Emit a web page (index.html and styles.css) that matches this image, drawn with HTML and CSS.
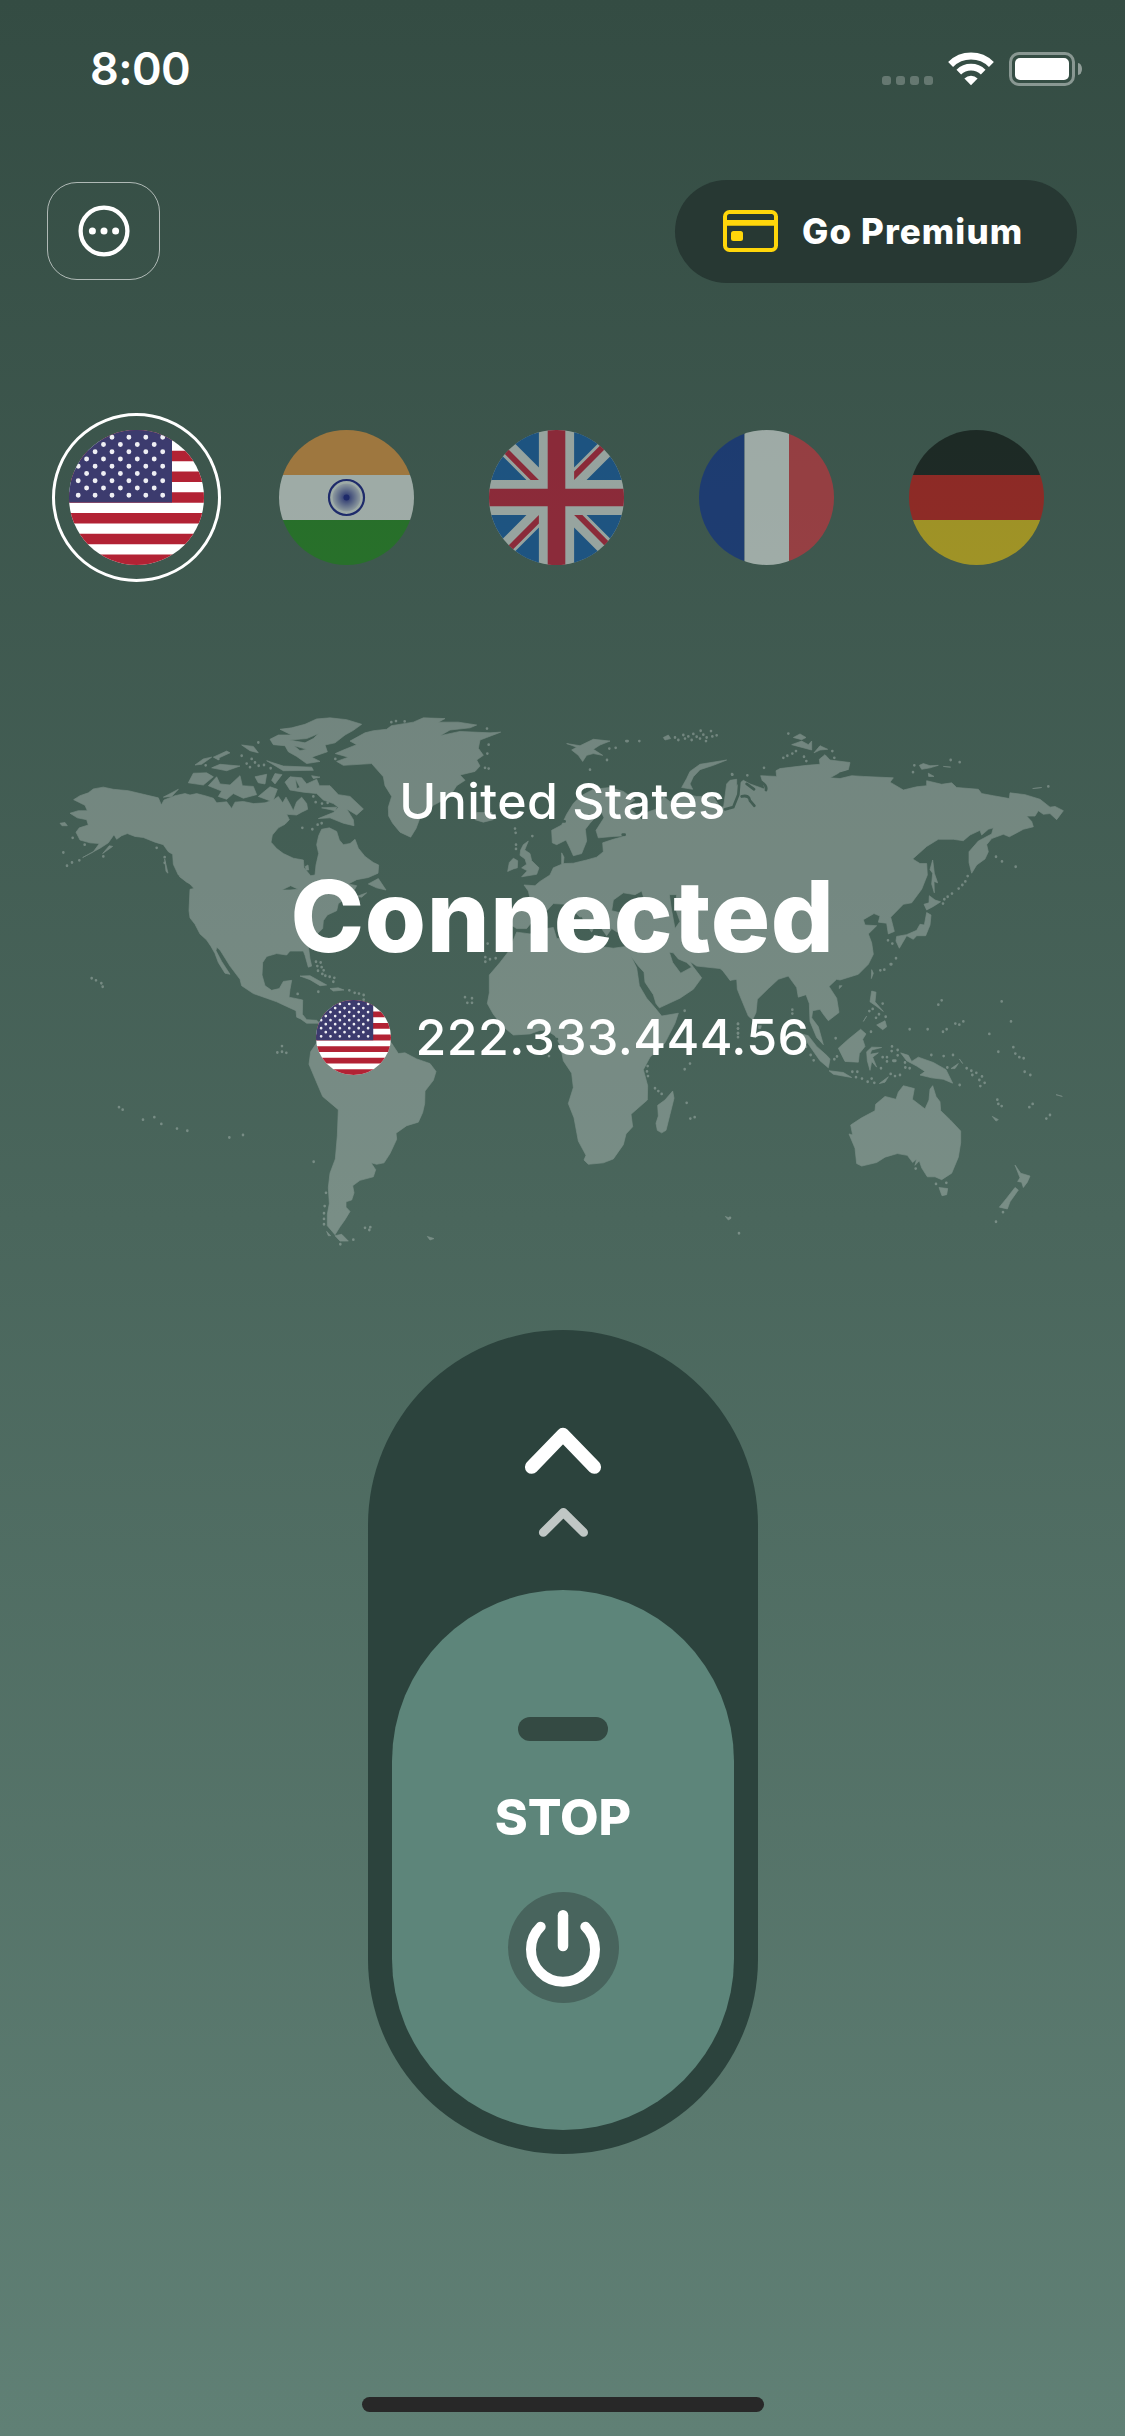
FILE: index.html
```html
<!DOCTYPE html>
<html lang="en">
<head>
<meta charset="utf-8">
<title>VPN</title>
<link rel="stylesheet" href="styles.css">
</head>
<body>
<svg class="defs" width="0" height="0" aria-hidden="true">
  <defs>
    <clipPath id="round"><circle cx="67.5" cy="67.5" r="67.5"/></clipPath>
    <radialGradient id="spokes"><stop offset="0" stop-color="#000088"/><stop offset="0.25" stop-color="#000088" stop-opacity=".75"/><stop offset="1" stop-color="#000088" stop-opacity=".12"/></radialGradient>
    <symbol id="us" viewBox="0 0 135 135">
      <g clip-path="url(#round)">
        <path fill="#fff" d="M0 0h135v135H0z"/>
        <path stroke="#b22234" stroke-width="10.38" d="M0 5.2h135M0 26h135M0 46.7h135M0 67.5h135M0 88.3h135M0 109h135M0 129.8h135"/>
        <path fill="#3c3b6e" d="M0 0h103v72.6H0z"/>
        <g stroke="#fff" stroke-width="4.9" stroke-linecap="round" stroke-dasharray="0 16.9" opacity=".92">
          <path d="M9.2 7.2h86M9.2 21.8h86M9.2 36.3h86M9.2 50.8h86M9.2 65.3h86M17.6 14.5h70M17.6 29h70M17.6 43.5h70M17.6 58h70"/>
        </g>
      </g>
    </symbol>
  </defs>
</svg>
<main class="screen">
  <header class="status">
    <span class="time">8:00</span>
    <div class="indicators">
      <div class="signal"><i></i><i></i><i></i><i></i></div>
      <svg class="wifi" width="46" height="34" viewBox="0 0 46 34">
        <g fill="none" stroke="#fff"><path stroke-width="7" d="M2.6 12.4a29 29 0 0 1 40.8 0"/><path stroke-width="6.6" d="M10.8 20.2a17.3 17.3 0 0 1 24.4 0"/></g>
        <path fill="#fff" d="M23 33.2l-6.6-6.7a9.5 9.5 0 0 1 13.200 0z"/>
      </svg>
      <div class="battery"><div class="cell"><div class="charge"></div></div><div class="nub"></div></div>
    </div>
  </header>

  <nav class="toolbar">
    <button class="menu" aria-label="Menu">
      <svg width="52" height="52" viewBox="0 0 52 52"><circle cx="26" cy="26" r="23.400" fill="none" stroke="#fff" stroke-width="4.300"/><g fill="#fff"><circle cx="14.400" cy="26" r="3.500"/><circle cx="26" cy="26" r="3.500"/><circle cx="37.600" cy="26" r="3.500"/></g></svg>
    </button>
    <button class="premium">
      <svg width="55" height="42" viewBox="0 0 55 42"><rect x="2" y="2" width="51" height="38" rx="4.500" fill="none" stroke="#ffd60a" stroke-width="4"/><path fill="#ffd60a" d="M2 10h51v5.700H2z"/><rect x="8" y="21" width="12" height="10" rx="2.500" fill="#ffd60a"/></svg>
      <span>Go Premium</span>
    </button>
  </nav>

  <section class="countries">
    <div class="country selected"><svg class="flag"><use href="#us"/></svg></div>
    <div class="country">
      <svg class="flag" viewBox="0 0 135 135"><g clip-path="url(#round)"><path fill="#f93" d="M0 0h135v45H0z"/><path fill="#fff" d="M0 45h135v45H0z"/><path fill="#138808" d="M0 90h135v45H0z"/></g><circle cx="67.500" cy="67.500" r="14" fill="url(#spokes)"/><circle cx="67.500" cy="67.500" r="17.500" fill="none" stroke="#008" stroke-width="2.200"/><circle cx="67.500" cy="67.500" r="3" fill="#008"/></svg>
    </div>
    <div class="country">
      <svg class="flag" viewBox="0 0 512 512"><circle fill="#f0f0f0" cx="256" cy="256" r="256"/>
        <path fill="#0052b4" d="M52.920 100.142c-20.109 26.163-35.272 56.318-44.101 89.077h133.178zM503.181 189.219c-8.829-32.758-23.993-62.913-44.101-89.076l-89.075 89.076zM8.819 322.784c8.830 32.758 23.993 62.913 44.101 89.075l89.074-89.075zM411.858 52.921c-26.163-20.109-56.317-35.272-89.076-44.102v133.177zM100.142 459.079c26.163 20.109 56.318 35.272 89.076 44.102V370.005zM189.217 8.819c-32.758 8.830-62.913 23.993-89.075 44.101l89.075 89.075zM322.783 503.181c32.758-8.830 62.913-23.993 89.075-44.101l-89.075-89.075zM370.005 322.784l89.075 89.076c20.108-26.162 35.272-56.318 44.101-89.076z"/>
        <path fill="#d80027" d="M509.833 222.609H289.392V2.167a258 258 0 0 0-66.783 0v220.442H2.167a258 258 0 0 0 0 66.783h220.442v220.441a258 258 0 0 0 66.783 0V289.392h220.441a258 258 0 0 0 0-66.783zM322.783 322.784L437.019 437.020c5.254-5.252 10.266-10.743 15.048-16.435l-97.802-97.802zM189.217 322.784L74.980 437.019c5.252 5.254 10.743 10.266 16.435 15.048l97.802-97.804zM189.217 189.219L74.981 74.980c-5.254 5.252-10.266 10.743-15.048 16.435l97.803 97.803zM322.783 189.219L437.020 74.981c-5.252-5.254-10.743-10.266-16.435-15.047l-97.802 97.803z"/></svg>
    </div>
    <div class="country">
      <svg class="flag" viewBox="0 0 135 135"><g clip-path="url(#round)"><path fill="#002395" d="M0 0h45.500v135H0z"/><path fill="#fff" d="M45.500 0h44.500v135H45.500z"/><path fill="#ed2939" d="M90 0h45v135H90z"/></g></svg>
    </div>
    <div class="country">
      <svg class="flag" viewBox="0 0 135 135"><g clip-path="url(#round)"><path d="M0 0h135v45H0z"/><path fill="#d00" d="M0 45h135v45H0z"/><path fill="#ffce00" d="M0 90h135v45H0z"/></g></svg>
    </div>
  </section>

  <section class="hero">
    <svg class="map" viewBox="0 0 3150 1568" preserveAspectRatio="none" aria-hidden="true">
      <mask id="water" maskUnits="userSpaceOnUse" x="0" y="0" width="3150" height="1568">
        <path fill="#fff" d="M0 0h3150v1568H0z"/>
        <g fill="none" stroke="#000" stroke-width="8" stroke-linecap="round">
          <path d="M1582 444h0M1608 446h0M1625 440h0M1640 418h0M1652 384h0M1675 405h0M1748 377h6M1568 340h6M1940 745h0M1545 950h6M2350 890h0M2400 207l22-6"/>
          <path d="M2098 230L2095 265 2080 300 2055 306M2120 235L2142 250M2165 230Q2182 240 2178 252M2105 270Q2128 265 2130 282L2143 296"/>
        </g>
      </mask>
      <g class="land" mask="url(#water)">
        <!-- Americas and Greenland -->
        <path fill-rule="evenodd" d="M101 279L120 268 145 260 160 249 190 244 220 250 265 254 310 264 355 274 364 294 372 280 405 268 435 262 450 266 470 262 495 268 520 275 530 288 560 285 575 304 585 286 610 284 640 290 675 288 700 280 715 270 728 288 738 272 750 292 760 310 770 285 785 272 800 290 803 306 785 314 770 322 740 320 748 335 735 348 715 358 697 378 693 398 710 416 730 430 760 443 790 448 792 470 812 492 825 490 828 462 836 430 830 405 836 380 845 362 868 358 890 368 898 392 910 405 930 402 945 390 955 415 975 438 1000 455 1016 462 1014 485 985 497 950 503 925 515 950 520 935 545 895 570 890 590 862 602 850 618 848 640 820 665 805 690 810 725 815 745 805 748 795 715 790 703 750 703 740 714 710 710 680 718 668 735 666 770 675 800 695 813 718 808 730 788 755 785 750 810 747 832 788 840 787 880 800 895 830 897 850 915 880 900 920 915 970 930 1020 945 1054 960 1075 990 1095 988 1130 1005 1170 1018 1188 1040 1180 1065 1155 1095 1154 1130 1148 1155 1135 1182 1100 1192 1068 1213 1070 1230 1050 1270 1032 1296 1010 1300 993 1296 1007 1315 1000 1335 960 1345 938 1360 942 1380 935 1400 918 1405 918 1420 930 1432 915 1455 900 1475 885 1497 862 1472 862 1440 868 1410 865 1365 870 1325 886 1285 892 1220 895 1147 848 1110 825 1060 807 1020 812 985 830 960 850 935 835 905 800 905 782 893 770 888 768 870 740 858 710 845 680 835 640 822 605 800 600 782 570 745 540 700 530 692 528 702 545 732 570 768 555 765 535 735 525 710 513 690 500 672 480 655 465 628 450 610 447 590 450 530 462 528 440 505 415 490 400 460 398 432 385 425 370 405 345 398 310 385 285 382 262 374 245 380 230 390 222 377 205 400 180 415 128 441 160 425 178 402 150 400 120 392 108 370 118 358 145 350 140 335 112 330 90 317 115 310 142 310 135 295zM725 532L752 520 775 530 750 532zM796 466L804 462 806 476 798 476z"/>
        <path d="M886 150L910 140 950 125 930 115 975 92 1000 86 1040 82 1054 72 1120 62 1150 50 1215 52 1195 62 1255 62 1310 70 1290 78 1230 84 1200 100 1260 88 1350 92 1382 90 1340 105 1320 112 1315 135 1330 155 1310 168 1320 185 1305 200 1260 210 1275 225 1250 240 1235 262 1210 280 1180 295 1140 330 1128 360 1112 384 1080 370 1058 345 1046 325 1045 300 1055 270 1035 240 1030 215 995 178 910 183 890 172 925 160z"/>
        <path fill-rule="evenodd" d="M795 68L830 53 870 50 920 55 965 68 940 85 915 98 885 120 855 126 862 145 815 160 840 172 800 178 770 158 745 145 735 128 700 125 690 110 715 98 755 98 720 82 755 78zM748 112L800 108 836 94 820 108 795 120zM762 128L800 138 780 142z"/>
        <path fill-rule="evenodd" d="M735 230L750 215 785 218 800 235 830 222 838 240 870 240 895 265 930 270 970 305 950 322 920 305 940 335 942 352 910 345 870 330 835 332 880 315 895 300 880 290 850 280 830 262 790 258 750 252zM766 220L780 245 770 248z"/>
        <path d="M505 240L530 215 540 235 570 238 600 212 607 240 640 242 650 265 610 275 580 262 560 278 535 270 545 255zM445 232L460 205 500 204 520 215 490 238zM645 215L680 208 675 235 655 232zM695 225L705 206 726 209 705 235zM465 182L490 165 515 160 485 180zM520 160L560 143 570 148 530 165zM515 190L540 180 600 185 560 198zM605 126L640 130 655 148 630 142zM680 170L730 185 815 188 820 197 730 198zM655 270L690 243 712 250 698 285zM815 212L840 216 820 220zM845 302L890 300 885 310zM985 515L1015 500 1038 532 1010 526zM950 550L980 540 965 552zM780 773L810 772 860 798 840 800 810 783zM870 808L895 806 912 812 880 815zM885 1500L905 1496 925 1515 900 1515zM860 1488L872 1500 865 1500zM60 345L75 343 82 352 66 352zM1305 335L1330 342 1360 335 1355 315 1310 315zM188 430L208 408 218 410zM374 445L384 485 378 480zM370 272L415 250 395 270zM418 494L440 498 460 520 440 510z"/>
        <path class="isles" d="M98 386h0M134 405h0M70 427h0M81 464h0M96 455h0M118 449h0M190 438h0M374 440h0M374 456h0M350 414h0M155 779h0M168 785h0M184 793h0M188 803h0M237 1140h0M248 1147h0M309 1175h0M343 1168h0M364 1187h0M411 1200h0M442 1206h0M568 1225h0M609 1218h0M821 1293h0M712 987h0M726 969h0M726 985h0M739 988h0M828 733h0M842 735h0M832 745h0M845 748h0M834 758h0M851 757h0M847 767h0M856 772h0M869 775h0M883 778h0M880 789h0M773 823h0M835 817h0M928 813h0M944 820h0M957 822h0M971 826h0M971 839h0M858 1380h0M854 1417h0M852 1437h0M852 1453h0M852 1468h0M975 1478h0M991 1476h0M988 1484h0M901 1524h0M940 1511h0M1054 62h0M1068 59h0M1094 60h0M605 156h0M655 119h0M635 165h0M620 178h0M630 188h0M645 175h0M656 184h0M672 182h0M692 191h0M820 270h0M827 286h0M846 290h0M863 288h0M787 358h0M817 362h0M833 349h0M845 345h0M535 165h0M497 183h0M886 165h0M744 504h0M1341 80h0M1346 125h0M1342 150h0M1346 192h0M1335 190h0"/>
        <!-- Africa and western Eurasia -->
        <g transform="translate(1020)">
          <path d="M385 705L410 650 450 655 500 640 520 637 530 668 600 672 660 690 700 695 740 690 750 712 770 750 778 800 800 835 825 862 845 885 895 877 885 905 855 960 810 1000 790 1035 803 1080 802 1120 753 1160 758 1195 738 1215 730 1245 700 1285 670 1296 625 1300 612 1288 618 1275 595 1235 582 1170 565 1130 580 1085 575 1045 550 1010 545 985 540 965 525 940 500 925 480 925 450 935 400 938 370 915 340 880 322 850 328 820 328 770 360 735z"/>
          <path fill-rule="evenodd" d="M432 518L465 520 480 508 510 490 520 470 545 460 545 428 552 440 550 458 580 457 620 448 650 440 670 425 668 400 700 390 740 380 700 382 655 386 648 365 672 330 665 315 645 330 630 345 616 362 620 395 605 430 580 436 570 415 558 392 530 405 517 400 515 365 545 350 560 320 580 290 600 270 640 250 690 245 730 256 765 280 740 295 785 335 800 315 830 305 850 270 870 285 905 262 950 270 1000 270 1020 300 1045 298 1075 305 1085 780 1050 785 1045 770 1020 752 950 745 930 732 938 745 965 778 940 810 900 835 838 862 828 850 820 825 795 790 792 762 775 745 755 720 740 700 760 660 720 655 695 640 680 660 650 620 635 650 600 600 560 572 520 570 500 590 470 605 440 640 410 640 385 625 390 600 430 590 450 555 445 535zM695 590L700 560 730 540 765 545 785 535 790 550 770 570 775 590 740 600zM868 545L890 545 885 580 900 620 885 640 875 590zM868 706L878 735 902 765 935 748 920 735 895 725 880 708z"/>
          <path d="M878 1095L882 1115 870 1160 858 1205 845 1212 832 1205 828 1185 835 1165 833 1135 855 1120zM445 395L430 405 422 420 420 435 435 445 440 460 425 470 442 478 425 495 470 488 477 470 455 450 450 430 434 420zM383 480L388 455 400 443 413 450 412 470 400 473zM560 122L600 128 640 110 690 115 660 126 640 138 668 155 640 150 620 155 608 172 595 155 575 140 590 132zM905 245L920 220 930 200 960 180 1040 168 1000 183 960 195 940 215 930 235 938 250zM850 105L865 98 872 108 855 112zM575 585L615 600 600 608zM142 1502L162 1508 150 1512zM1036 1446L1052 1452 1045 1456z"/>
          <path class="isles" d="M739 115h4M778 115h0M688 136h0M707 134h0M681 168h0M630 195h0M885 105h0M895 112h0M910 98h0M915 108h0M925 102h0M935 112h0M940 95h0M950 103h0M962 86h0M960 108h0M970 97h0M980 105h0M993 87h0M997 102h0M1010 99h0M978 115h0M405 360h0M407 372h0M408 405h0M408 417h0M457 381h0M323 682h0M316 720h0M316 733h0M330 726h0M347 723h0M255 832h0M276 835h0M262 848h0M276 848h0M914 870h0M930 1018h0M914 1034h0M803 1025h0M801 1040h0M804 1053h0M825 1087h0M835 1095h0M845 1103h0M920 1128h0M931 1172h0M944 1168h0M507 997h0M1074 907h0M1074 920h0M1074 933h0M1056 208h0"/>
        </g>
        <!-- Asia and Oceania -->
        <g transform="translate(2070)">
          <path d="M-20 305L-10 235 0 225 20 222 20 240 40 225 60 235 90 245 105 250 100 235 92 212 140 214 138 198 150 192 230 183 270 180 268 166 285 153 300 168 360 175 355 195 325 205 300 218 330 220 365 212 400 214 490 218 480 230 520 252 560 243 590 240 590 226 635 236 665 232 680 245 745 250 755 262 790 268 838 276 840 260 885 265 930 278 960 300 975 298 1000 310 980 335 960 318 940 320 925 310 915 325 890 325 905 340 910 355 880 362 838 383 820 376 785 388 770 405 775 425 765 445 740 462 725 485 717 455 717 425 745 395 785 375 790 358 775 362 755 378 750 365 720 378 700 394 670 390 625 390 590 410 548 445 570 458 590 458 592 490 575 530 545 568 520 572 482 608 493 648 475 655 470 625 445 622 450 605 432 598 400 615 405 630 440 632 415 655 425 680 430 712 415 740 385 768 330 784 320 782 297 802 320 835 327 875 295 898 280 880 270 866 248 870 245 890 265 915 280 965 260 945 240 900 238 850 228 825 205 832 200 805 175 773 145 782 115 808 82 838 78 875 68 895 55 885 35 840 22 810 20 778 0 785 -20 760z"/>
          <path d="M190 105L210 95 228 105 215 111zM185 125L215 115 235 125 245 115 245 140zM252 148L270 128 293 138 270 140zM568 183L580 178 600 184 625 183 600 190 575 194zM640 186L662 188zM595 205L612 214 596 214zM908 248L935 245zM608 448L613 485 623 512 612 508 613 540 605 515 608 485 600 475zM598 548L615 560 632 565 610 578 590 588 582 572 597 568zM590 595L603 602 600 630 587 660 560 660 550 670 530 660 508 695 498 675 500 662 530 657 560 645 570 628 583 630zM425 755L430 765 424 780zM425 815L438 818 435 845 460 872 440 858 420 845zM440 910L465 898 470 915 458 923zM400 900L410 885zM325 975L355 950 392 922 408 935 398 950 405 970 388 990 385 1014 345 1012zM215 935L235 940 260 970 290 995 300 1005 295 1030 270 1010 240 970zM297 1038L340 1043 365 1057 310 1048zM410 985L425 972 455 973 425 980 420 992 445 988 428 1000 440 1028 425 1012 420 1037 412 1010zM512 988L535 995 545 1012 565 1000 610 1015 648 1035 668 1073 640 1062 605 1058 570 1050 585 1040 560 1025 530 1010zM663 1032L685 1018 675 1032zM688 1005L698 1018zM448 1074L475 1055 465 1070zM520 1080L553 1088 547 1118 585 1145 597 1120 600 1090 608 1080 618 1110 630 1125 632 1150 660 1175 692 1207 692 1240 685 1280 665 1325 635 1343 615 1335 592 1335 575 1310 568 1290 555 1303 560 1285 548 1295 532 1275 502 1270 465 1280 440 1295 395 1305 380 1298 375 1255 357 1215 368 1218 362 1190 395 1170 435 1150 437 1132 465 1110 498 1118 505 1098zM627 1365L653 1368 650 1385 636 1388zM855 1302L872 1325 900 1333 892 1350 880 1365 875 1350 863 1348 870 1338zM855 1365L865 1372 840 1405 832 1425 808 1420 830 1395zM787 1166L805 1175 798 1179zM978 1105L997 1110zM328 800L336 800 328 808zM85 912L94 912 92 920 86 920z"/>
          <path class="isles" d="M175 94h0M160 162h0M172 156h0M187 150h0M198 143h0M222 159h0M229 171h0M307 143h0M313 162h0M102 190h0M7 209h0M52 211h0M553 183h0M549 202h0M662 168h0M689 174h0M955 242h0M798 439h0M816 452h0M857 467h0M713 493h0M706 508h0M697 518h0M686 528h0M666 542h0M653 551h0M643 558h0M639 570h0M474 673h0M487 682h0M498 723h0M482 740h2M451 757h0M463 755h0M635 841h0M625 853h0M815 844h0M843 900h0M700 900h0M688 909h0M676 906h0M650 922h0M639 929h0M593 922h0M539 922h0M778 935h0M805 985h0M850 972h0M856 990h0M868 1000h0M881 1003h0M884 1041h0M901 1050h0M187 867h0M187 878h0M428 865h0M418 871h0M438 890h0M447 880h0M458 850h0M467 887h0M423 929h0M317 947h0M321 998h0M313 1006h0M228 971h0M242 994h0M251 1009h0M367 1041h0M382 1041h0M378 1056h0M396 1060h0M413 1069h0M425 1060h0M433 1072h0M453 1031h0M458 1000h0M471 1000h0M471 1012h0M486 970h0M503 980h0M503 995h0M485 983h0M490 1010h6M525 1015h0M526 1029h0M539 1031h0M482 1047h0M495 1053h0M510 1050h0M604 994h0M641 997h0M669 994h0M652 1029h0M689 1078h0M710 1031h0M724 1038h0M727 1050h0M739 1044h0M756 1054h0M748 1064h0M764 1072h0M751 1081h0M802 1119h0M805 1131h0M815 1137h0M908 1131h0M898 1140h0M960 1162h0M949 1172h0M618 1355h0M649 1352h0M557 1312h0M819 1434h0M798 1461h0M27 1493h0M0 1450h0M24 907h0M24 920h0M24 933h0M24 944h0"/>
        </g>
      </g>
    </svg>
    <div class="place">United States</div>
    <h1 class="state">Connected</h1>
    <div class="address"><svg class="mini-flag"><use href="#us"/></svg><span>222.333.444.56</span></div>
  </section>

  <section class="slider">
    <svg class="chevrons" width="78" height="112" viewBox="0 0 78 112" fill="none" stroke="#fff" stroke-linecap="round" stroke-linejoin="round"><path stroke-width="13.600" d="M7.700 41L39 8.600 70.300 41"/><path stroke-width="8.800" opacity=".7" d="M19.300 106.400L39.400 86.400 59.600 106.400"/></svg>
    <button class="knob">
      <span class="grip"></span>
      <span class="label">STOP</span>
      <span class="power"><svg width="78" height="82" viewBox="0 0 78 82" fill="none" stroke="#fff" stroke-linecap="round"><path stroke-width="10" d="M16.700 21.700A32 32 0 1 0 61.300 21.700"/><path stroke-width="10.500" d="M39 10.300V41"/></svg></span>
    </button>
  </section>
  <div class="home-bar"></div>
</main>
</body>
</html>
```
FILE: styles.css
```css
* { box-sizing: border-box; }
body { margin: 0; font-family: Inter, "Liberation Sans", sans-serif; color: #fff; }
button { margin: 0; padding: 0; border: 0; background: none; color: inherit; font: inherit; }
svg { display: block; }
.defs { position: absolute; }
.screen { width: 1125px; height: 2436px; display: flex; flex-direction: column; overflow: hidden; background: linear-gradient(#344c43, #608075); }

.status { height: 138px; padding: 0 43px 0 90px; display: flex; align-items: center; justify-content: space-between; }
.time { font-size: 45px; font-weight: 600; line-height: 54px; letter-spacing: -.6px; }
.indicators { display: flex; align-items: center; gap: 15px; height: 34px; }
.signal { display: flex; gap: 5px; align-self: flex-end; padding-bottom: 1px; }
.signal i { width: 9px; height: 9px; border-radius: 3px; background: rgba(255, 255, 255, .24); }
.battery { display: flex; align-items: center; gap: 3px; }
.cell { width: 66px; height: 34px; padding: 3px; border: 3px solid rgba(255, 255, 255, .42); border-radius: 10px; }
.charge { height: 22px; border-radius: 5px; background: #fff; }
.nub { width: 4px; height: 12px; border-radius: 0 4px 4px 0 / 0 6px 6px 0; background: rgba(255, 255, 255, .45); }

.toolbar { margin-top: 42px; height: 103px; padding: 0 48px 0 47px; display: flex; align-items: center; justify-content: space-between; }
.menu { width: 113px; height: 98px; margin-bottom: 2px; display: flex; align-items: center; justify-content: center; border: 1px solid rgba(255, 255, 255, .6); border-radius: 30px; }
.premium { width: 402px; height: 103px; padding: 0 0 2px 48px; display: flex; align-items: center; gap: 24px; border-radius: 52px; background: #273833; font-size: 35px; font-weight: 800; white-space: nowrap; letter-spacing: 1.1px; }

.countries { margin-top: 130px; padding-left: 52px; display: flex; gap: 41px; }
.country { width: 169px; height: 169px; flex: none; display: flex; align-items: center; justify-content: center; border-radius: 50%; }
.country .flag { width: 135px; height: 135px; opacity: .5; }
.selected { border: 3px solid #fff; }
.selected .flag { opacity: 1; }

.hero { position: relative; margin-top: 118px; height: 560px; padding-top: 71px; display: flex; flex-direction: column; align-items: center; }
.map { position: absolute; left: 40px; top: 0; width: 1050px; height: 560px; }
.land { fill: #fff; stroke: #fff; stroke-width: 2; stroke-linejoin: round; opacity: .26; }
.isles { fill: none; stroke-width: 8; stroke-linecap: round; }
.place { position: relative; height: 60px; line-height: 60px; font-size: 50px; font-weight: 500; letter-spacing: .45px; }
.state { position: relative; margin: 25px 0 0; height: 120px; line-height: 120px; font-size: 99px; font-weight: 800; letter-spacing: .6px; }
.address { position: relative; margin-top: 24px; display: flex; align-items: center; gap: 25px; font-size: 50px; font-weight: 500; line-height: 75px; letter-spacing: .4px; }
.mini-flag { width: 75px; height: 75px; }

.slider { align-self: center; position: relative; left: .5px; margin-top: 70px; width: 390px; height: 824px; padding: 96px 24px 24px; display: flex; flex-direction: column; align-items: center; justify-content: space-between; border-radius: 195px; background: #2c433d; }
.knob { width: 342px; height: 540px; padding-top: 127px; display: flex; flex-direction: column; align-items: center; border-radius: 171px; background: #5d857a; }
.grip { width: 90px; height: 24px; border-radius: 12px; background: #344a43; }
.label { margin-top: 46px; height: 60px; line-height: 60px; font-size: 50px; font-weight: 800; }
.power { margin-top: 45px; width: 111px; height: 111px; padding-bottom: 3px; display: flex; align-items: center; justify-content: center; border-radius: 50%; background: #48645d; }

.home-bar { align-self: center; margin-top: 243px; width: 402px; height: 15px; flex: none; border-radius: 8px; background: #282828; }
```
